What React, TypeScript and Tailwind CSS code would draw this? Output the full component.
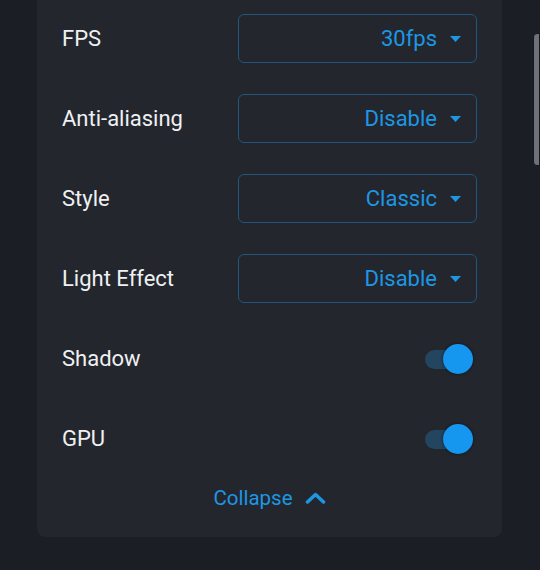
import { useState } from 'react';

interface SelectRowProps {
  label: string;
  value: string;
}

function SelectRow({ label, value }: SelectRowProps) {
  return (
    <div className="flex h-[49px] items-center justify-between">
      <span className="text-[22px] text-[#eef0f3]">{label}</span>
      <div className="flex h-[49px] w-[239px] items-center justify-end rounded-[6px] border border-[#1f5680] pr-[15px]">
        <span className="text-[22px] text-[#1d97e4]">{value}</span>
        {/* caret */}
        <svg className="ml-[13px]" width="11" height="6" viewBox="0 0 11 6">
          <path d="M0 0h11L5.5 6z" fill="#1d97e4" />
        </svg>
      </div>
    </div>
  );
}

function ToggleRow({ label }: { label: string }) {
  const [on, setOn] = useState(true);
  return (
    <div className="flex h-[49px] items-center justify-between">
      <span className="text-[22px] text-[#eef0f3]">{label}</span>
      <button
        onClick={() => setOn(!on)}
        className="relative mr-[4px] h-[30px] w-[48px]"
      >
        <span className="absolute left-0 top-[6px] h-[19px] w-[44px] rounded-full bg-[#24455f]" />
        <span
          className={`absolute top-0 h-[30px] w-[30px] rounded-full shadow-[0_0_3px_rgba(0,0,0,0.6)] ${
            on ? 'left-[18px] bg-[#1597ef]' : 'left-0 bg-[#9aa0a6]'
          }`}
        />
      </button>
    </div>
  );
}

export default function App() {
  return (
    <div
      className="relative h-[570px] w-[540px] overflow-hidden bg-[#1b1e24]"
      style={{ fontFamily: 'Roboto, "Noto Sans", sans-serif' }}
    >
      <div className="ml-[37px] w-[465px] rounded-b-[8px] bg-[#23262d] px-[25px] pb-[27px] pt-[14px]">
        <div className="flex flex-col gap-[31px]">
          <SelectRow label="FPS" value="30fps" />
          <SelectRow label="Anti-aliasing" value="Disable" />
          <SelectRow label="Style" value="Classic" />
          <SelectRow label="Light Effect" value="Disable" />
          <ToggleRow label="Shadow" />
          <ToggleRow label="GPU" />
        </div>
        <div className="mt-[23px] flex h-[24px] items-center justify-center gap-[12px]">
          <span className="text-[20.5px] text-[#1d97e4]">Collapse</span>
          <svg width="21" height="12" viewBox="0 0 21 12">
            <path d="M2.5 10l8-7.5 8 7.5" fill="none" stroke="#1d97e4" strokeWidth="3.5" strokeLinecap="round" strokeLinejoin="round" />
          </svg>
        </div>
      </div>

      {/* scrollbar thumb */}
      <div className="absolute right-0 top-[33px] h-[133px] w-[7px] rounded-l-[4px] border border-[#15171b] bg-[#6e7177]" />
    </div>
  );
}
